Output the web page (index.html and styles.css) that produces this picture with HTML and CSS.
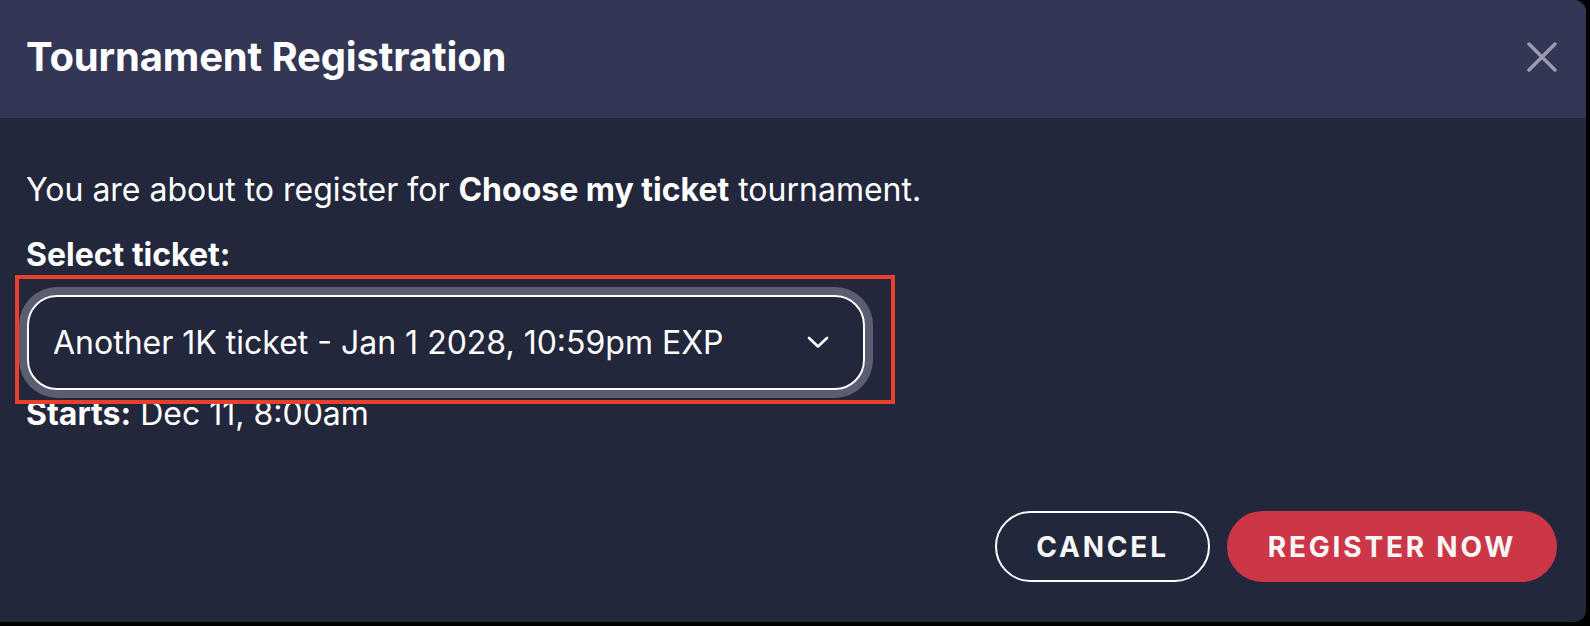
FILE: index.html
```html
<!DOCTYPE html>
<html lang="en">
<head>
<meta charset="utf-8">
<title>Tournament Registration</title>
<link rel="stylesheet" href="styles.css">
</head>
<body>
<div class="modal">
  <header class="modal-header">
    <h1 class="modal-title">Tournament Registration</h1>
    <button class="close-btn" aria-label="Close">
      <svg width="30" height="30" viewBox="0 0 30 30"><path d="M2 2 L28 28 M28 2 L2 28" fill="none" stroke="#9a9cb0" stroke-width="3.5" stroke-linecap="round"/></svg>
    </button>
  </header>
  <section class="modal-body">
    <p class="intro">You are about to register for <strong>Choose my ticket</strong> tournament.</p>
    <p class="label">Select ticket:</p>
    <div class="select-wrap">
      <div class="select">
        <span class="select-value">Another 1K ticket - Jan 1 2028, 10:59pm EXP</span>
        <svg class="chevron" width="22" height="13" viewBox="0 0 22 13"><path d="M2 2 L11 10.5 L20 2" fill="none" stroke="#ffffff" stroke-width="2.6" stroke-linecap="round" stroke-linejoin="round"/></svg>
      </div>
      <div class="annotation"></div>
    </div>
    <p class="starts"><strong>Starts:</strong> Dec 11, 8:00am</p>
  </section>
  <footer class="modal-footer">
    <button class="btn btn-outline">CANCEL</button>
    <button class="btn btn-primary">REGISTER NOW</button>
  </footer>
</div>
</body>
</html>
```
FILE: styles.css
```css
* { box-sizing: border-box; }
html, body {
  margin: 0;
  padding: 0;
  background: #000000;
}
body {
  width: 1590px;
  height: 626px;
  overflow: hidden;
  font-family: Inter, "Noto Sans", "Liberation Sans", sans-serif;
  color: #ffffff;
}
.modal {
  width: 1586px;
  height: 622px;
  background: #23273c;
  border-radius: 0 12px 12px 0;
  overflow: hidden;
  display: flex;
  flex-direction: column;
}
.modal-header {
  height: 118px;
  flex: none;
  background: #333655;
  display: flex;
  align-items: center;
  justify-content: space-between;
  padding: 0 29px 4px 26px;
}
.modal-title {
  margin: 0;
  font-size: 40px;
  font-weight: 700;
  line-height: 48px;
  letter-spacing: -0.15px;
}
.close-btn {
  background: none;
  border: 0;
  padding: 0;
  width: 30px;
  height: 30px;
  display: flex;
  cursor: pointer;
}
.modal-body {
  padding: 52px 29px 0 26px;
  font-size: 32px;
  line-height: 40px;
}
.modal-body p { margin: 0; }
.intro strong, .label, .starts strong { font-weight: 700; }
.modal-body .label { margin-top: 25px; }
.select-wrap {
  position: relative;
  margin-top: 20px;
  width: 838px;
  margin-left: 1px;
}
.select {
  height: 95px;
  border: 2px solid #ffffff;
  border-radius: 30px;
  box-shadow: 0 0 0 8px #5b5e71;
  display: flex;
  align-items: center;
  justify-content: space-between;
  padding: 0 34px 0 24px;
  font-size: 32px;
}
.chevron { display: block; }
.annotation {
  position: absolute;
  left: -12px;
  top: -20px;
  width: 880px;
  height: 129px;
  border: 4px solid #e8402c;
  pointer-events: none;
}
.modal-body .starts { margin-top: 4px; }
.modal-footer {
  margin-top: auto;
  padding: 0 29px 40px 0;
  display: flex;
  justify-content: flex-end;
  gap: 17px;
}
.btn {
  height: 71px;
  border-radius: 36px;
  padding: 0 39px;
  font-family: Inter, "Noto Sans", "Liberation Sans", sans-serif;
  font-size: 28px;
  font-weight: 700;
  letter-spacing: 2.8px;
  color: #f7f7f8;
  cursor: pointer;
}
.btn-outline {
  background: transparent;
  border: 2px solid #ffffff;
}
.btn-primary {
  background: #cc3647;
  border: 2px solid #cc3647;
}
```
